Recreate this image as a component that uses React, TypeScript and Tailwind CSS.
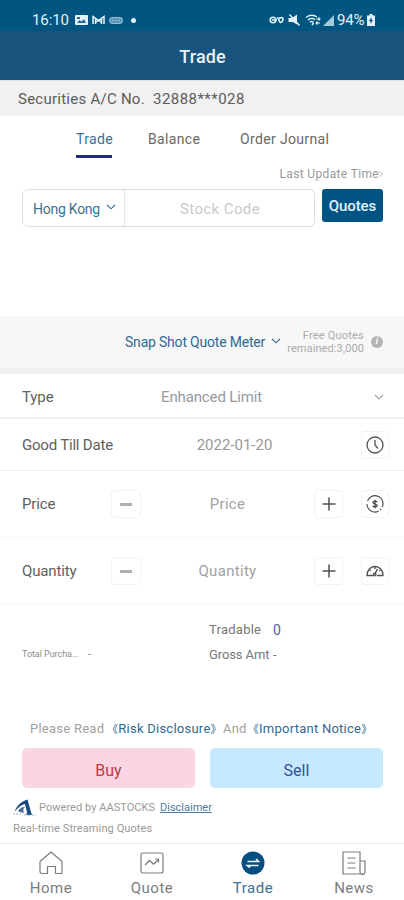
import React from 'react';
import clsx from 'clsx';

const Chevron: React.FC<{ className?: string }> = ({ className }) => (
  <svg viewBox="0 0 10 6" fill="none" stroke="currentColor" strokeWidth="1.1" className={clsx('h-1.5 w-2.5 shrink-0', className)}>
    <path d="M1 1l4 3.8L9 1" />
  </svg>
);

const StatusBar: React.FC = () => (
  <div className="flex h-[31px] shrink-0 items-center bg-[#005581] pt-[9px] pr-[29px] pl-8 text-[#e3f1f8]">
    <span className="w-[38px] text-[15px] tracking-[-0.1px] whitespace-nowrap">16:10</span>
    {/* Notification icons */}
    <svg viewBox="0 0 13 10" className="ml-[5px] h-2.5 w-[13px]">
      <rect width="13" height="10" rx="1" fill="currentColor" />
      <path d="M2 2h3v2H2zM2 8l2.5-3 2 1.5L9 4l2 4z" fill="#24698f" />
    </svg>
    <svg viewBox="0 0 13 10" fill="none" stroke="currentColor" strokeWidth="1.5" className="ml-1 h-2.5 w-[13px]">
      <path d="M1 9V1.5l5.5 4 5.5-4V9M3.5 9V3.5M9.5 9V3.5M3 8l3.5-3L10 8" />
    </svg>
    <svg viewBox="0 0 14 7" className="ml-1 h-[7px] w-3.5 text-[#8fbbd2]">
      <rect x=".7" y=".7" width="12.6" height="5.6" rx="2.5" fill="#508eaf" stroke="currentColor" strokeWidth="1.2" />
      <path d="M3 3.5h8" stroke="currentColor" strokeWidth="1.3" strokeDasharray="2 1" />
    </svg>
    <span className="ml-2 size-[5px] rounded-full bg-current" />
    <div className="ml-auto flex items-center">
      <svg viewBox="0 0 15 8" fill="none" stroke="currentColor" strokeWidth="1.6" className="h-2 w-[15px]">
        <circle cx="4" cy="4" r="2.8" />
        <path d="M3 4h5M8 1.5c2 0 2 5 3.5 5S14 4.5 14 2.8c0-1.5-3-1.8-4 .2" />
      </svg>
      <svg viewBox="0 0 13 12" className="ml-1 h-3 w-[13px]">
        <path d="M.5 4H4L9 .5v10L5 8H.5z" fill="currentColor" />
        <path d="M1.5 .5l10 11" stroke="currentColor" strokeWidth="1.5" />
      </svg>
      <svg viewBox="0 0 16 12" fill="none" stroke="currentColor" strokeWidth="1.5" className="ml-1 h-3 w-4">
        <path d="M1 3.5C4 .5 9 .5 12 3M3 6c2-2 5-2 7-.3M5 8.3c1-1 2-1 3.5 0M7 11l1.5-2" />
        <path d="M11 5h4M13.5 3.5L15 5l-1.5 1.5M15 9h-4M12.5 7.5L11 9l1.5 1.5" strokeWidth="1.1" />
      </svg>
      <svg viewBox="0 0 11 11" className="ml-0.5 size-[11px] text-[#a4cbdc]">
        <path d="M0 11L11 0v11z" fill="currentColor" />
      </svg>
      <span className="ml-[3px] w-[30px] text-[15px] tracking-[-0.2px] whitespace-nowrap">94%</span>
      <svg viewBox="0 0 8 12" className="h-3 w-2">
        <path d="M2.5 0h3v1.5H8V12H0V1.5h2.5z" fill="currentColor" />
        <path d="M4.5 3L2 7h1.5v3L6 6H4.5z" fill="#005581" />
      </svg>
    </div>
  </div>
);

const tabs = [
  { label: 'Trade', className: 'ml-[76px] w-9 text-[#3b7196]' },
  { label: 'Balance', className: 'ml-9 w-[52px] text-[#686868]' },
  { label: 'Order Journal', className: 'ml-10 w-[90px] text-[#686868]' },
];

const Tabs: React.FC = () => (
  <div className="flex h-[42px] shrink-0">
    {tabs.map((tab, i) => (
      <div key={tab.label} className={clsx('flex flex-col justify-between pt-[13px] text-sm leading-5 tracking-[0.35px] whitespace-nowrap', tab.className)}>
        {tab.label}
        {i === 0 && <span className="h-[3px] bg-[#202b84]" />}
      </div>
    ))}
  </div>
);

const IconBox: React.FC<{ children: React.ReactNode; className?: string }> = ({ children, className }) => (
  <button className={clsx('flex h-7 shrink-0 items-center justify-center rounded border border-[#f2f2f2] text-[#505050]', className)}>
    {children}
  </button>
);

const ClockIcon: React.FC = () => (
  <svg viewBox="0 0 18 18" fill="none" stroke="currentColor" strokeWidth="1.3" className="size-[18px]">
    <circle cx="9" cy="9" r="8" />
    <path d="M9 4v5l3 3.5" />
  </svg>
);

const PriceIcon: React.FC = () => (
  <svg viewBox="0 0 18 18" fill="none" stroke="currentColor" strokeWidth="1.2" className="size-[18px]">
    <path d="M1.5 6A8 8 0 0 1 17 9.5a7 7 0 0 1-.8 2.5M1 9a8 8 0 0 0 11.5 7.2M14 15l1-1" />
    <path d="M11.3 7.2C10.8 5.6 7 5.7 7 7.5s4.3 1.3 4.3 3.1c0 1.8-4 1.9-4.6.2M9.1 4.8v8.4" strokeWidth="1.3" />
  </svg>
);

const GaugeIcon: React.FC = () => (
  <svg viewBox="0 0 18 12" fill="none" stroke="currentColor" strokeWidth="1.3" className="h-3 w-[18px]">
    <path d="M7 10.5H1C1 5 4.5 1.5 9 1.5s8 3.5 8 9h-6" />
    <path d="M9 2v2M3.5 5l1.2 1M14.5 5l-1.2 1" />
    <path d="M8.5 9.5L11.5 4" strokeWidth="1.5" />
    <circle cx="8.7" cy="9.5" r="1.3" />
  </svg>
);

interface StepperRowProps {
  label: string;
  icon: React.ReactNode;
  className: string;
}

const StepperRow: React.FC<StepperRowProps> = ({ label, icon, className }) => (
  <div className={clsx('flex shrink-0 items-center border-b border-[#f5f5f5] pr-[15px] pl-[22px]', className)}>
    <span className="w-[89px] pt-px text-[15px] tracking-[-0.15px] text-[#606060]">{label}</span>
    <IconBox className="w-[30px]">
      <span className="h-[3px] w-3 bg-[#b0b0b0]" />
    </IconBox>
    <span className="flex-1 pt-px text-center text-[15px] tracking-[0.3px] text-[#a2a2a2]">{label}</span>
    <IconBox className="w-[29px]">
      <svg viewBox="0 0 14 14" stroke="currentColor" strokeWidth="1.5" className="size-3.5">
        <path d="M7 .5v13M.5 7h13" />
      </svg>
    </IconBox>
    <IconBox className="ml-[18px] w-7">{icon}</IconBox>
  </div>
);

const HomeIcon: React.FC = () => (
  <svg viewBox="0 0 24 24" fill="none" stroke="currentColor" strokeWidth="1.2" strokeLinejoin="round" className="size-6">
    <path d="M8.5 15.5v7H3a2 2 0 0 1-2-2v-10L12 1l11 9.5v12h-6.5v-7z" />
  </svg>
);

const QuoteIcon: React.FC = () => (
  <svg viewBox="0 0 24 24" fill="none" stroke="currentColor" strokeWidth="1.2" className="size-6">
    <rect x="1" y="2" width="22" height="20" rx="2" />
    <path d="M5 14l4.5-4.5 4 3.5L18 9" strokeWidth="1.4" />
    <path d="M15 8h3.5v3.5" />
  </svg>
);

const TradeIcon: React.FC = () => (
  <svg viewBox="0 0 24 24" className="size-6">
    <circle cx="12" cy="12" r="11.5" fill="#044e80" />
    <path d="M6.5 10.5h11L15 8M17.5 14.5h-11l2.5 2" fill="none" stroke="#e8f3f9" strokeWidth="1.7" />
  </svg>
);

const NewsIcon: React.FC = () => (
  <svg viewBox="0 0 24 24" fill="none" stroke="currentColor" strokeWidth="1.2" className="size-6">
    <path d="M21 23H1V1h17v20a2 2 0 0 0 5 0V10h-5" />
    <path d="M5.5 7h8M5.5 12h8M5.5 17h8" />
  </svg>
);

const navItems = [
  { label: 'Home', icon: <HomeIcon /> },
  { label: 'Quote', icon: <QuoteIcon /> },
  { label: 'Trade', icon: <TradeIcon />, active: true },
  { label: 'News', icon: <NewsIcon /> },
];

const NoticeLink: React.FC<{ children: string }> = ({ children }) => (
  <span className="text-[#33698f]">
    <span className="text-[11px]">《</span>
    {children}
    <span className="text-[11px]">》</span>
  </span>
);

export default function App() {
  return (
    <div className="flex h-[900px] w-[404px] flex-col overflow-hidden bg-white font-['Roboto','Noto_Sans_CJK_SC',sans-serif]">
      <StatusBar />
      <header className="flex h-[49px] shrink-0 items-center justify-center bg-[#19547f] pt-0.5 pl-px text-lg font-medium tracking-[0.1px] text-[#e9f1f7]">
        Trade
      </header>
      <div className="flex h-9 shrink-0 items-center border-t border-[#dce1e5] bg-[#f1f1f1] pt-0.5 pl-[18px] text-[15px] whitespace-nowrap text-[#5c5c5c]">
        <span className="w-[135px] tracking-[0.25px]">Securities A/C No.</span>
        <span className="tracking-[0.45px]">32888***028</span>
      </div>

      <Tabs />

      <div className="flex h-[31px] shrink-0 items-center justify-end pt-px pr-5 text-xs tracking-[0.35px] text-[#999]">
        Last Update Time
        <svg viewBox="0 0 5 8" fill="none" stroke="#c8c8c8" className="h-2 w-[5px]">
          <path d="M.5 1.5L4 4 .5 6.5" />
        </svg>
      </div>

      {/* Stock search */}
      <div className="flex h-[127px] shrink-0 items-start gap-[7px] pr-[21px] pl-[22px]">
        <div className="flex h-[38px] w-[293px] rounded-md border border-[#dcdcdc]">
          <div className="flex w-[102px] items-center border-r border-[#e7e7e7] pt-0.5 pl-2.5 text-sm tracking-[-0.25px] text-[#3b7196]">
            <span className="w-[73px] whitespace-nowrap">Hong Kong</span>
            <Chevron className="-mt-1" />
          </div>
          <div className="flex flex-1 items-center justify-center pt-0.5 pl-px text-[15px] tracking-[0.4px] text-[#cacaca]">
            Stock Code
          </div>
        </div>
        <button className="h-[33px] flex-1 rounded-[3px] bg-[#005484] pt-0.5 text-[15px] font-medium tracking-[-0.1px] text-[#e5f0f7]">
          Quotes
        </button>
      </div>

      {/* Quote meter */}
      <div className="flex h-[58px] shrink-0 items-center border-b-6 border-[#efefef] bg-[#f7f7f7] pr-[21px] pl-[125px]">
        <span className="w-[146px] text-sm tracking-[-0.2px] whitespace-nowrap text-[#33698f]">Snap Shot Quote Meter</span>
        <Chevron className="-mt-0.5 text-[#33698f]" />
        <div className="ml-auto text-right text-[11px] leading-[13px] tracking-[0.1px] text-[#aaa]">
          <span className="tracking-[0.2px]">Free Quotes</span>
          <br />
          remained:3,000
        </div>
        <span className="ml-[7px] flex size-3 items-center justify-center rounded-full bg-[#b4b4b4] text-[9px] font-bold text-white italic">i</span>
      </div>

      {/* Order form */}
      <div className="flex h-[45px] shrink-0 items-center border-b-2 border-[#f0f0f0] pt-[3px] pr-5 pl-[22px] text-[15px]">
        <span className="w-[139px] tracking-[-0.1px] text-[#606060]">Type</span>
        <span className="tracking-[-0.13px] text-[#999]">Enhanced Limit</span>
        <Chevron className="ml-auto text-[#999]" />
      </div>
      <div className="flex h-[52px] shrink-0 items-center border-b border-[#efefef] pt-px pr-[15px] pl-[22px] text-[15px]">
        <span className="w-[119px] tracking-[-0.2px] text-[#606060]">Good Till Date</span>
        <span className="w-[187px] text-center text-[#999]">2022-01-20</span>
        <IconBox className="ml-auto w-7">
          <ClockIcon />
        </IconBox>
      </div>
      <StepperRow label="Price" icon={<PriceIcon />} className="h-[67px]" />
      <StepperRow label="Quantity" icon={<GaugeIcon />} className="h-[66px] pt-px" />

      {/* Summary */}
      <div className="h-[112px] shrink-0 pt-[13px] text-[13px] leading-[25px] text-[#777]">
        <div className="flex h-[25px] items-center pl-[209px]">
          <span className="w-16 tracking-[0.25px]">Tradable</span>
          <span className="text-sm text-[#5260a5]">0</span>
        </div>
        <div className="flex h-[25px] items-center pl-[22px]">
          <span className="w-[66px] text-[9px] tracking-[-0.05px] whitespace-nowrap text-[#8b8b8b]">Total Purcha...</span>
          <span className="w-[121px] text-[10px]">-</span>
          <span className="w-16 tracking-[-0.1px] whitespace-nowrap">Gross Amt</span>
          <span>-</span>
        </div>
      </div>

      <div className="flex h-8 shrink-0 items-center pb-1.5 pl-[30px] text-[13px] tracking-[0.25px] whitespace-nowrap text-[#a0a0a0]">
        <span className="w-[77px]">Please Read</span>
        <NoticeLink>Risk Disclosure</NoticeLink>
        <span className="w-[26px] text-center">And</span>
        <NoticeLink>Important Notice</NoticeLink>
      </div>

      <div className="flex h-10 shrink-0 gap-[15px] pr-[21px] pl-[22px] text-base">
        <button className="flex-1 rounded-[5px] bg-[#fad6e4] pt-1.5 text-[#c33745]">Buy</button>
        <button className="flex-1 rounded-[5px] bg-[#c6e9ff] pt-1.5 text-[#34519b]">Sell</button>
      </div>

      <div className="h-[55px] shrink-0 pt-[9px] pl-[13px] text-[11px] leading-[21px] text-[#999]">
        <div className="flex items-center whitespace-nowrap">
          <svg viewBox="0 0 23 17" className="h-[17px] w-[23px]">
            <path d="M1.5 12.5C4 6.5 9 2 14.5.5l4 14.500h-4L12 5C8 6 5 9 1.500 12.500z" fill="#17477e" />
            <path d="M5 12.5c1.5-3.5 4-5 7-4.5-2 1.5-2 4-1 6z" fill="#4d6f96" />
            <path d="M0 15h9M11 16h5M19 16h4" stroke="#9bbcc4" strokeWidth="1.2" strokeDasharray="2 1" />
            <path d="M13 14.5c2 1.5 4 1.5 6 .5" fill="none" stroke="#1c6da0" strokeWidth="1.3" />
          </svg>
          <span className="ml-[3px] w-[121px] tracking-[0.05px]">Powered by AASTOCKS</span>
          <span className="text-[#4b7d9e] underline">Disclaimer</span>
        </div>
        <div className="tracking-[0.1px]">Real-time Streaming Quotes</div>
      </div>

      <nav className="flex flex-1 border-t border-[#ececec] pt-[7px]">
        {navItems.map((item) => (
          <div key={item.label} className={clsx('flex w-[101px] flex-col items-center pl-px text-[15px] leading-[26px] tracking-[0.5px]', item.active ? 'text-[#3b7196]' : 'text-[#7c7c7c]')}>
            {item.icon}
            {item.label}
          </div>
        ))}
      </nav>
    </div>
  );
}
